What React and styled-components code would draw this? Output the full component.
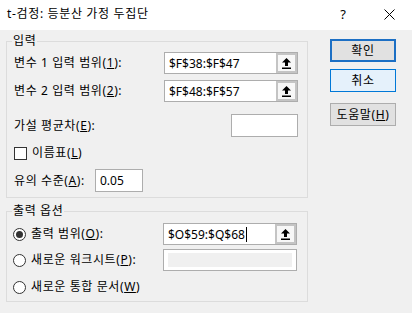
import React from 'react';
import styled, { createGlobalStyle } from 'styled-components';

const Global = createGlobalStyle`
  html, body { margin: 0; padding: 0; background: #f0f0f0; }
  body {
    font-family: "Noto Sans", "Noto Sans CJK KR", sans-serif;
    font-size: 12px;
    color: #000;
  }
  * { box-sizing: border-box; }
`;

const Window = styled.div`
  width: 412px;
  height: 313px;
  display: flex;
  flex-direction: column;
  overflow: hidden;
  background: #f0f0f0;
`;

const TitleBar = styled.div`
  height: 30px;
  flex-shrink: 0;
  background: #fff;
  display: flex;
  align-items: center;
  padding-left: 7px;
`;

const Title = styled.div`
  flex: 1;
  font-size: 12px;
  line-height: 16px;
  padding-bottom: 2px;
  letter-spacing: 0.65px;
`;

const CaptionButton = styled.div`
  width: 46px;
  height: 30px;
  display: flex;
  align-items: center;
  justify-content: center;
  font-size: 13px;
  padding-bottom: 2px;
`;

const Body = styled.div`
  display: flex;
  padding: 4px 0 0 6px;
`;

const LeftColumn = styled.div`
  width: 302px;
  display: flex;
  flex-direction: column;
`;

const RightColumn = styled.div`
  width: 66px;
  margin-left: 22px;
  padding-top: 5px;
  display: flex;
  flex-direction: column;
`;

const Group = styled.fieldset`
  margin: ${p => p.$mt || 0}px 0 0 0;
  padding: 0;
  border: 1px solid #dcdcdc;
  min-width: 0;
  width: 302px;
`;

const Legend = styled.legend`
  margin-left: 5px;
  padding: 0 1px;
  line-height: 14px;
  font-size: 12px;
  letter-spacing: 0.6px;
`;

const Content = styled.div`
  display: flex;
  flex-direction: column;
  padding: 0 9px ${p => p.$pb}px 7px;
`;

const Row = styled.div`
  display: flex;
  align-items: center;
  height: ${p => p.$h}px;
  margin-top: ${p => p.$mt}px;
`;

const Label = styled.div`
  width: ${p => (p.$w ? `${p.$w}px` : 'auto')};
  flex-shrink: 0;
  white-space: nowrap;
  line-height: 16px;
  letter-spacing: 0.6px;
`;

const U = styled.span`
  text-decoration: underline;
  text-underline-offset: 1px;
`;

const Spacer = styled.div`
  flex: 1;
`;

const RefInput = styled.div`
  width: 134px;
  height: 100%;
  display: flex;
  border: 1px solid #adadad;
  background: #fff;
`;

const RefText = styled.div`
  flex: 1;
  display: flex;
  align-items: center;
  padding-left: 4px;
  white-space: nowrap;
`;

const Caret = styled.span`
  display: inline-block;
  width: 1px;
  height: 15px;
  background: #000;
  margin-left: 1px;
`;

const RefButton = styled.div`
  width: 21px;
  height: 100%;
  border: 2px solid #c4c4c4;
  background: #f7f7f7;
  display: flex;
  align-items: center;
  justify-content: center;
`;

const TextBox = styled.div`
  width: ${p => p.$w}px;
  height: 100%;
  border: 1px solid #adadad;
  background: #fff;
  display: flex;
  align-items: center;
  padding-left: 4px;
`;

const DisabledBox = styled.div`
  width: 134px;
  height: 100%;
  border: 1px solid #adadad;
  background: #fff;
  padding: 3px 4px;
  display: flex;
`;

const DisabledFill = styled.div`
  flex: 1;
  background: #f0f0f0;
`;

const Check = styled.div`
  width: 13px;
  height: 13px;
  border: 1px solid #333;
  background: #fff;
  margin-right: 5px;
  flex-shrink: 0;
`;

const Radio = styled.div`
  width: 13px;
  height: 13px;
  border-radius: 50%;
  border: 1px solid #333;
  background: #fff;
  margin-right: 5px;
  margin-left: -1px;
  flex-shrink: 0;
  display: flex;
  align-items: center;
  justify-content: center;
  &::after {
    content: '';
    width: 7px;
    height: 7px;
    border-radius: 50%;
    background: ${p => (p.$checked ? '#333' : 'transparent')};
  }
`;

const Button = styled.div`
  height: 23px;
  margin-top: ${p => p.$mt || 0}px;
  display: flex;
  align-items: center;
  justify-content: center;
  background: ${p => (p.$variant === 'hover' ? '#e5f1fb' : '#e1e1e1')};
  border: ${p =>
    p.$variant === 'default'
      ? '2px solid #1c6fc4'
      : p.$variant === 'hover'
      ? '1px solid #0078d7'
      : '1px solid #adadad'};
  line-height: 16px;
  white-space: nowrap;
  letter-spacing: 0.6px;
`;

const ArrowIcon = () => (
  <svg width="9" height="11" viewBox="0 0 9 11">
    <polygon points="4.5,0 9,4.5 6,4.5 6,8 3,8 3,4.5 0,4.5" fill="#000" />
    <rect x="0" y="9.5" width="9" height="1.5" fill="#000" />
  </svg>
);

const CloseIcon = () => (
  <svg width="11" height="11" viewBox="0 0 11 11">
    <path d="M0.5 0.5 L10.5 10.5 M10.5 0.5 L0.5 10.5" stroke="#000" strokeWidth="1" />
  </svg>
);

const RefField = ({ value, caret }) => (
  <RefInput>
    <RefText>
      {value}
      {caret && <Caret />}
    </RefText>
    <RefButton>
      <ArrowIcon />
    </RefButton>
  </RefInput>
);

export default function App() {
  return (
    <>
      <Global />
      <Window>
        <TitleBar>
          <Title>t-검정: 등분산 가정 두집단</Title>
          <CaptionButton>?</CaptionButton>
          <CaptionButton>
            <CloseIcon />
          </CaptionButton>
        </TitleBar>
        <Body>
          <LeftColumn>
            <Group>
              <Legend>입력</Legend>
              <Content $pb={5}>
                <Row $h={22} $mt={4}>
                  <Label $w={150}>
                    변수 1 입력 범위(<U>1</U>):
                  </Label>
                  <RefField value="$F$38:$F$47" />
                </Row>
                <Row $h={22} $mt={6}>
                  <Label $w={150}>
                    변수 2 입력 범위(<U>2</U>):
                  </Label>
                  <RefField value="$F$48:$F$57" />
                </Row>
                <Row $h={23} $mt={12}>
                  <Label>
                    가설 평균차(<U>E</U>):
                  </Label>
                  <Spacer />
                  <TextBox $w={67} />
                </Row>
                <Row $h={16} $mt={8}>
                  <Check />
                  <Label>
                    이름표(<U>L</U>)
                  </Label>
                </Row>
                <Row $h={23} $mt={8}>
                  <Label $w={81}>
                    유의 수준(<U>A</U>):
                  </Label>
                  <TextBox $w={48}>0.05</TextBox>
                </Row>
              </Content>
            </Group>
            <Group $mt={6}>
              <Legend>출력 옵션</Legend>
              <Content $pb={4}>
                <Row $h={22} $mt={5}>
                  <Radio $checked />
                  <Label $w={132}>
                    출력 범위(<U>O</U>):
                  </Label>
                  <RefField value="$O$59:$Q$68" caret />
                </Row>
                <Row $h={22} $mt={4}>
                  <Radio />
                  <Label $w={132}>
                    새로운 워크시트(<U>P</U>):
                  </Label>
                  <DisabledBox>
                    <DisabledFill />
                  </DisabledBox>
                </Row>
                <Row $h={20} $mt={6}>
                  <Radio />
                  <Label>
                    새로운 통합 문서(<U>W</U>)
                  </Label>
                </Row>
              </Content>
            </Group>
          </LeftColumn>
          <RightColumn>
            <Button $variant="default">확인</Button>
            <Button $variant="hover" $mt={7}>
              취소
            </Button>
            <Button $mt={11}>
              도움말(<U>H</U>)
            </Button>
          </RightColumn>
        </Body>
      </Window>
    </>
  );
}
